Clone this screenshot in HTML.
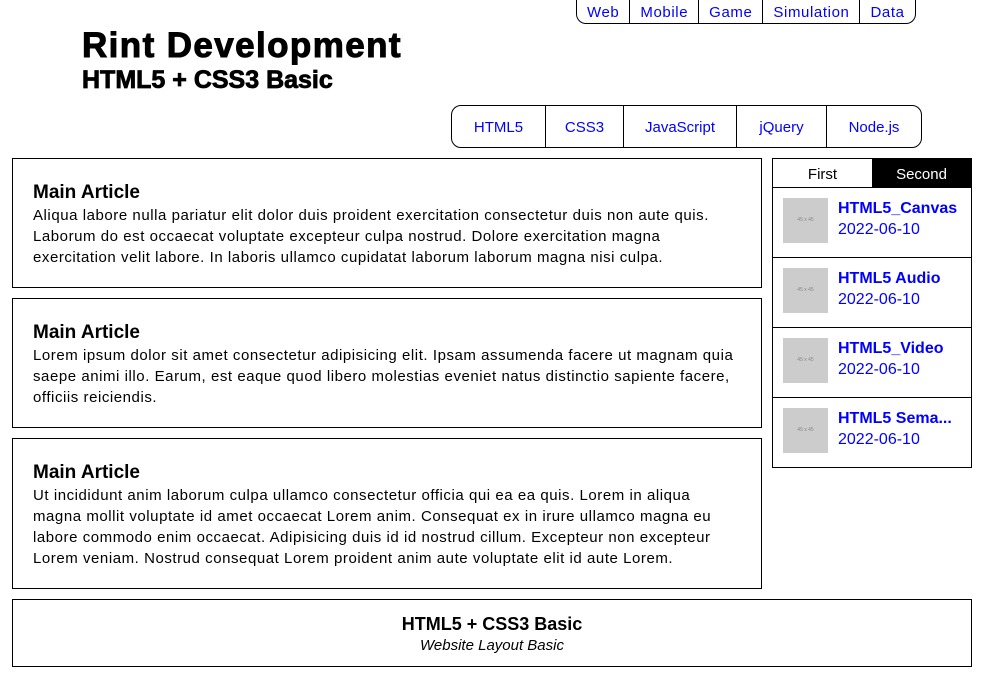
<!DOCTYPE html>
<html><head><meta charset="utf-8"><style>
*{box-sizing:border-box;margin:0;padding:0}
body{width:982px;height:678px;background:#fff;font-family:"Liberation Sans","Noto Sans CJK KR",sans-serif;color:#000;position:relative;overflow:hidden}
.top{position:absolute;left:576px;top:0;height:24px;border:1px solid #000;border-top:none;border-radius:0 0 10px 10px;display:flex;font-size:15px}
.top a{color:#00f;text-decoration:none;padding:0 10px;line-height:25px;border-left:1px solid #000;letter-spacing:0.6px}
.top a:first-child{border-left:none}
h1{position:absolute;left:82px;top:26px;font-size:35px;font-weight:900;letter-spacing:1.4px;-webkit-text-stroke:1px #000}
h2{position:absolute;left:82px;top:66px;font-size:25px;font-weight:900;-webkit-text-stroke:0.8px #000}
.nav{position:absolute;left:451px;top:105px;width:471px;height:43px;border:1px solid #000;border-radius:10px;display:flex;font-size:15px}
.nav a{color:#00f;text-decoration:none;line-height:44px;text-align:center;border-left:1px solid #000}
.nav a:first-child{border-left:none}
.art{position:absolute;left:12px;width:750px;border:1px solid #000;padding:22px 24px 20px 20px;font-size:15px;line-height:21px;letter-spacing:0.55px}
.art h3{font-size:19px;line-height:24px;letter-spacing:0}
.side{position:absolute;left:772px;top:158px;width:200px;height:310px;border:1px solid #000}
.tabs{display:flex;height:29px;font-size:15px;border-bottom:1px solid #000}
.tabs div{flex:1;text-align:center;line-height:32px}
.item{height:70px;border-bottom:1px solid #000;position:relative}
.item:last-child{border-bottom:none}
.thumb{position:absolute;left:10px;top:10px;width:45px;height:45px;background:#ccc;font-size:5px;color:#888;text-align:center;line-height:45px}
.t{position:absolute;left:65px;top:12px;color:#00f;font-weight:bold;font-size:16px;white-space:nowrap}
.d{position:absolute;left:65px;top:33px;color:#00f;font-size:16px}
.foot{position:absolute;left:12px;top:599px;width:960px;height:68px;border:1px solid #000;text-align:center}
</style></head><body>
<div class="top"><a>Web</a><a>Mobile</a><a>Game</a><a>Simulation</a><a>Data</a></div>
<h1>Rint Development</h1>
<h2>HTML5 + CSS3 Basic</h2>
<div class="nav"><a style="width:93px">HTML5</a><a style="width:78px">CSS3</a><a style="width:113px">JavaScript</a><a style="width:90px">jQuery</a><a style="width:95px">Node.js</a></div>
<div class="art" style="top:158px;height:130px"><h3>Main Article</h3>Aliqua labore nulla pariatur elit dolor duis proident exercitation consectetur duis non aute quis. Laborum do est occaecat voluptate excepteur culpa nostrud. Dolore exercitation magna exercitation velit labore. In laboris ullamco cupidatat laborum laborum magna nisi culpa.</div>
<div class="art" style="top:298px;height:130px"><h3>Main Article</h3>Lorem ipsum dolor sit amet consectetur adipisicing elit. Ipsam assumenda facere ut magnam quia saepe animi illo. Earum, est eaque quod libero molestias eveniet natus distinctio sapiente facere, officiis reiciendis.</div>
<div class="art" style="top:438px;height:151px"><h3>Main Article</h3>Ut incididunt anim laborum culpa ullamco consectetur officia qui ea ea quis. Lorem in aliqua magna mollit voluptate id amet occaecat Lorem anim. Consequat ex in irure ullamco magna eu labore commodo enim occaecat. Adipisicing duis id id nostrud cillum. Excepteur non excepteur Lorem veniam. Nostrud consequat Lorem proident anim aute voluptate elit id aute Lorem.</div>
<div class="side">
<div class="tabs"><div>First</div><div style="background:#000;color:#fff">Second</div></div>
<div class="item"><div class="thumb">45 x 45</div><div class="t">HTML5_Canvas</div><div class="d">2022-06-10</div></div>
<div class="item"><div class="thumb">45 x 45</div><div class="t">HTML5 Audio</div><div class="d">2022-06-10</div></div>
<div class="item"><div class="thumb">45 x 45</div><div class="t">HTML5_Video</div><div class="d">2022-06-10</div></div>
<div class="item"><div class="thumb">45 x 45</div><div class="t">HTML5 Sema...</div><div class="d">2022-06-10</div></div>
</div>
<div class="foot"><div style="font-size:18px;font-weight:bold;margin-top:12px;line-height:24px">HTML5 + CSS3 Basic</div><div style="font-style:italic;font-size:15px;line-height:20px">Website Layout Basic</div></div>
</body></html>
